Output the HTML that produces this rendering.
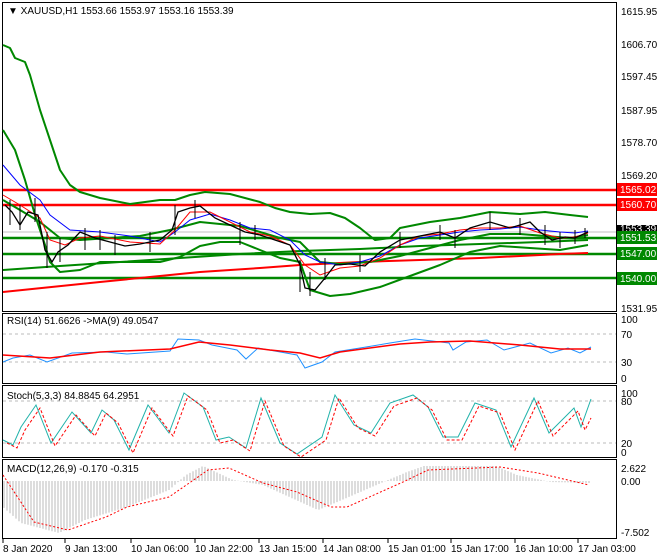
<!DOCTYPE html>
<html><head><meta charset="utf-8"><style>
body{margin:0;background:#fff;width:660px;height:560px;overflow:hidden;font-family:"Liberation Sans",sans-serif}
svg{display:block}
text{font-family:"Liberation Sans",sans-serif;font-size:10px;fill:#000}
</style></head><body>
<svg width="660" height="560" viewBox="0 0 660 560">
<g fill="none" stroke="#000" stroke-width="1">
<rect x="2.5" y="2.5" width="614" height="309"/>
<rect x="2.5" y="313.5" width="614" height="70"/>
<rect x="2.5" y="385.5" width="614" height="72"/>
<rect x="2.5" y="459.5" width="614" height="79"/>
</g>
<text x="8" y="14">&#9660; XAUUSD,H1  1553.66 1553.97 1553.16 1553.39</text>
<line x1="3" y1="232" x2="616" y2="232" stroke="#c0c0c0"/>
<g stroke-width="2.5">
<line x1="3" y1="190" x2="616" y2="190" stroke="#f00"/>
<line x1="3" y1="205" x2="616" y2="205" stroke="#f00"/>
<line x1="3" y1="238" x2="616" y2="238" stroke="#080"/>
<line x1="3" y1="254" x2="616" y2="254" stroke="#080"/>
<line x1="3" y1="278" x2="616" y2="278" stroke="#080"/>
</g>
<g fill="none" stroke-width="2" stroke-linejoin="round">
<polyline stroke="#f00" points="3,292 100,282 160,276 200,272 260,268 300,265 360,262 420,260 480,258 560,254 588,253"/>
<polyline stroke="#080" points="3,270 60,266 120,262 180,258 240,254 300,251 360,249 420,246 480,244 540,242 588,240"/>
<polyline stroke="#080" points="3,45 10,48 15,58 25,62 30,75 40,110 50,140 60,170 70,185 80,192 100,198 130,204 160,200 175,200 190,195 205,192 230,194 260,202 275,208 290,212 310,214 330,213 345,218 360,228 375,240 390,238 400,228 430,222 460,218 490,212 520,214 545,212 570,215 588,217"/>
<polyline stroke="#080" points="3,130 15,150 25,180 35,215 45,245 50,262 60,272 80,270 100,262 130,262 160,262 180,257 200,246 220,242 240,242 260,250 280,258 300,262 310,290 330,296 350,294 380,287 410,276 440,265 470,252 500,246 530,248 560,250 588,245"/>
<polyline stroke="#080" points="3,200 20,210 40,222 60,238 80,240 110,238 140,236 170,230 200,222 220,224 240,226 260,232 280,238 300,242 320,262 340,264 370,262 400,256 430,248 460,240 490,234 520,234 545,236 570,238 588,235"/>
</g>
<g fill="none" stroke-width="1">
<polyline stroke="#00f" points="3,165 20,185 40,200 50,215 70,230 100,232 130,236 160,242 175,232 190,220 210,214 230,220 250,228 270,230 290,240 305,255 320,262 340,265 360,262 380,256 400,245 420,238 440,235 460,232 480,230 500,229 520,227 540,230 560,232 575,233 588,231"/>
<polyline stroke="#f00" points="3,195 20,205 40,218 50,240 65,245 80,238 100,236 130,242 160,244 175,230 190,212 210,212 230,222 250,232 270,236 290,245 305,265 320,275 340,268 360,266 380,258 400,245 420,236 440,234 460,230 480,228 500,228 520,226 540,233 560,238 575,237 588,233"/>
</g>
<polyline fill="none" stroke="#000" stroke-width="1.3" points="5,205 12,212 20,225 28,212 38,215 45,250 52,262 58,252 68,245 80,232 95,238 110,242 125,246 140,244 160,240 172,230 178,212 190,208 200,206 215,218 230,225 245,232 260,235 275,240 290,245 300,265 305,288 315,290 325,278 335,265 350,264 365,266 380,252 400,240 420,236 440,232 455,238 470,228 490,222 510,228 530,222 540,232 552,240 565,237 575,238 588,232"/>
<g stroke="#000" stroke-width="1">
<path d="M10,200V225M20,205V230M35,198V222M47,232V268M60,238V262M85,228V250M100,230V250M115,235V255M150,232V252M175,205V235M195,200V218M240,222V245M255,225V240M300,260V292M310,272V296M325,258V280M360,255V272M400,232V248M440,225V240M455,230V248M490,212V230M520,218V235M545,225V245M560,232V248M575,230V244M585,228V238"/>
</g>
<g>
<text x="621" y="15">1615.95</text><text x="621" y="48">1606.70</text><text x="621" y="80">1597.45</text>
<text x="621" y="114">1587.95</text><text x="621" y="146">1578.70</text><text x="621" y="179">1569.20</text>
<text x="621" y="312">1531.95</text>
<rect x="617" y="183" width="40" height="13" fill="#f00"/><text x="620" y="193" style="fill:#fff">1565.02</text>
<rect x="617" y="198" width="40" height="13" fill="#f00"/><text x="620" y="208" style="fill:#fff">1560.70</text>
<rect x="617" y="225" width="40" height="8" fill="#000"/><text x="620" y="232" style="fill:#fff">1553.39</text>
<rect x="617" y="231" width="40" height="13" fill="#080"/><text x="620" y="241" style="fill:#fff">1551.53</text>
<rect x="617" y="247" width="40" height="13" fill="#080"/><text x="620" y="257" style="fill:#fff">1547.00</text>
<rect x="617" y="272" width="40" height="13" fill="#080"/><text x="620" y="282" style="fill:#fff">1540.00</text>
</g>
<text x="7" y="324">RSI(14) 51.6626  -&gt;MA(9) 49.0547</text>
<g stroke="#bbb" stroke-dasharray="3,3"><line x1="3" y1="334" x2="616" y2="334"/><line x1="3" y1="362" x2="616" y2="362"/></g>
<polyline fill="none" stroke="#1e90ff" points="3,362 13,358 30,355 47,362 72,353 106,352 127,354 170,351 178,339 199,340 212,345 237,350 246,359 258,348 297,355 305,368 322,362 335,352 360,348 390,343 415,339 449,343 453,350 466,342 487,340 504,350 530,343 551,353 568,348 580,353 591,347"/>
<polyline fill="none" stroke="#f00" stroke-width="1.5" points="3,355 50,358 100,352 170,349 199,342 230,345 270,350 300,353 320,358 340,352 400,344 430,342 470,341 520,345 560,349 591,349"/>
<text x="621" y="323">100</text><text x="621" y="338">70</text><text x="621" y="366">30</text><text x="621" y="382">0</text>
<text x="7" y="399">Stoch(5,3,3) 84.8845 64.2951</text>
<g stroke="#bbb" stroke-dasharray="3,3"><line x1="3" y1="401" x2="616" y2="401"/><line x1="3" y1="443" x2="616" y2="443"/></g>
<polyline fill="none" stroke="#20b2aa" points="3,440 13,445 21,427 36,405 51,443 72,412 91,433 102,410 114,420 129,450 148,405 169,433 184,393 203,407 216,440 229,437 246,448 261,398 280,443 297,454 322,437 335,395 354,425 371,433 390,403 413,395 428,407 443,437 458,437 475,403 496,410 511,447 534,398 549,433 574,408 581,427 591,399"/>
<polyline fill="none" stroke="#f00" stroke-dasharray="3,2" transform="translate(4,3)" points="3,440 13,445 21,427 36,405 51,443 72,412 91,433 102,410 114,420 129,450 148,405 169,433 184,393 203,407 216,440 229,437 246,448 261,398 280,443 297,454 322,437 335,395 354,425 371,433 390,403 413,395 428,407 443,437 458,437 475,403 496,410 511,447 534,398 549,433 574,408 581,427 587,415"/>
<text x="621" y="397">100</text><text x="621" y="405">80</text><text x="621" y="447">20</text><text x="621" y="456">0</text>
<text x="7" y="472">MACD(12,26,9) -0.170 -0.315</text>
<g id="hist" stroke="#bbb" stroke-width="1"></g>
<polyline fill="none" stroke="#f00" stroke-dasharray="2,2" points="3,475 34,522 68,530 106,517 127,507 169,497 208,470 229,468 263,483 297,492 331,507 347,507 403,482 428,470 500,467 538,473 589,485"/>
<text x="621" y="472">2.622</text><text x="621" y="485">0.00</text><text x="621" y="536">-7.502</text>
<g stroke="#000"><path d="M3,539V543M65,539V543M131,539V543M195,539V543M259,539V543M323,539V543M388,539V543M451,539V543M515,539V543M578,539V543"/></g>
<text x="3" y="552">8 Jan 2020</text><text x="65" y="552">9 Jan 13:00</text><text x="131" y="552">10 Jan 06:00</text>
<text x="195" y="552">10 Jan 22:00</text><text x="259" y="552">13 Jan 15:00</text><text x="323" y="552">14 Jan 08:00</text>
<text x="388" y="552">15 Jan 01:00</text><text x="451" y="552">15 Jan 17:00</text><text x="515" y="552">16 Jan 10:00</text>
<text x="578" y="552">17 Jan 03:00</text>
</svg>
<script>
var pts=[[3,507],[21,523],[59,533],[85,520],[127,507],[169,490],[186,475],[203,466],[233,480],[263,485],[318,510],[335,503],[381,483],[407,472],[424,466],[496,466],[517,475],[551,482],[589,483]];
var g=document.getElementById('hist'),s='';
for(var x=4;x<=589;x+=3){var i=0;while(i<pts.length-2&&pts[i+1][0]<x)i++;var a=pts[i],b=pts[i+1],t=(x-a[0])/(b[0]-a[0]);var y=a[1]+(b[1]-a[1])*t;s+='<line x1="'+x+'" x2="'+x+'" y1="481" y2="'+y.toFixed(1)+'"/>';}
g.innerHTML=s;
</script>
</body></html>
